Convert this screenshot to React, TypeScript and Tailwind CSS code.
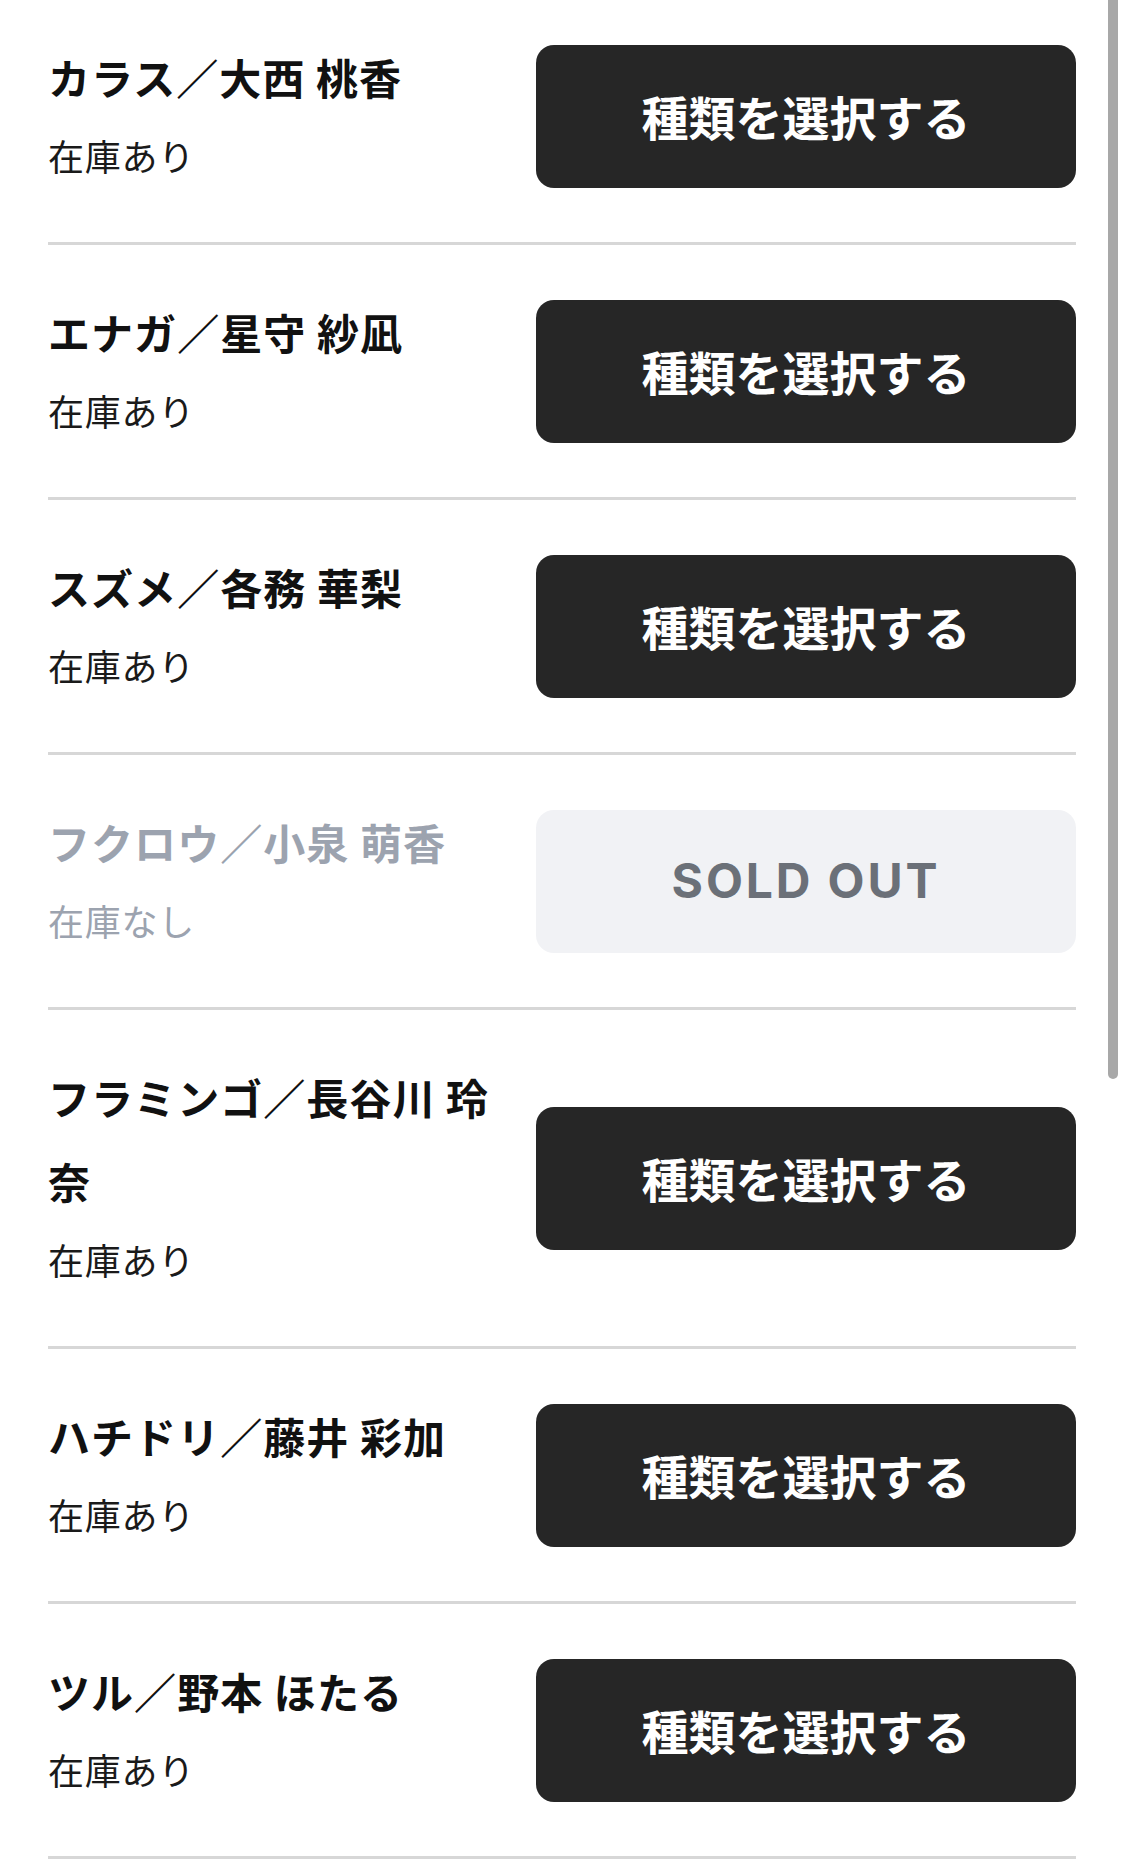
import React from "react";

type Item = {
  name: string;
  inStock: boolean;
};

const items: Item[] = [
  { name: "カラス／大西 桃香", inStock: true },
  { name: "エナガ／星守 紗凪", inStock: true },
  { name: "スズメ／各務 華梨", inStock: true },
  { name: "フクロウ／小泉 萌香", inStock: false },
  { name: "フラミンゴ／長谷川 玲奈", inStock: true },
  { name: "ハチドリ／藤井 彩加", inStock: true },
  { name: "ツル／野本 ほたる", inStock: true },
];

const jp = "font-['Noto_Sans_CJK_JP','Noto_Sans',sans-serif]";

const Row: React.FC<{ item: Item }> = ({ item }) => {
  const muted = !item.inStock;
  return (
    <li className="flex items-center gap-[36px] border-b-[3px] border-[#d7d7d7] py-[48px]">
      <div className="min-w-0 flex-1">
        <p
          className={`${jp} -mt-[3px] text-[42px] font-bold leading-[84px] tracking-[0.025em] ${
            muted ? "text-[#9ca3af]" : "text-[#111111]"
          }`}
        >
          {item.name}
        </p>
        <p
          className={`${jp} mb-[3px] text-[36px] leading-[72px] tracking-[0.02em] ${
            muted ? "text-[#9ca3af]" : "text-[#1a1a1a]"
          }`}
        >
          {item.inStock ? "在庫あり" : "在庫なし"}
        </p>
      </div>

      {item.inStock ? (
        <button
          type="button"
          className={`${jp} flex h-[143px] w-[540px] shrink-0 items-center justify-center rounded-[18px] bg-[#262626] text-[47px] font-bold text-white`}
        >
          種類を選択する
        </button>
      ) : (
        <button
          type="button"
          disabled
          className="flex h-[143px] w-[540px] shrink-0 items-center justify-center rounded-[18px] bg-[#f1f2f5] font-['Inter',sans-serif] text-[48px] font-bold tracking-[0.06em] text-[#6b7078]"
        >
          SOLD OUT
        </button>
      )}
    </li>
  );
};

export default function App() {
  return (
    <div className="relative min-h-screen overflow-hidden bg-white">
      <ul className="-mt-[10px] px-[48px]">
        {items.map((item) => (
          <Row key={item.name} item={item} />
        ))}
      </ul>

      {/* overlay scrollbar thumb */}
      <div className="pointer-events-none absolute right-[6px] top-[-20px] h-[1099px] w-[10px] rounded-full bg-[#a8a8a8]" />
    </div>
  );
}
